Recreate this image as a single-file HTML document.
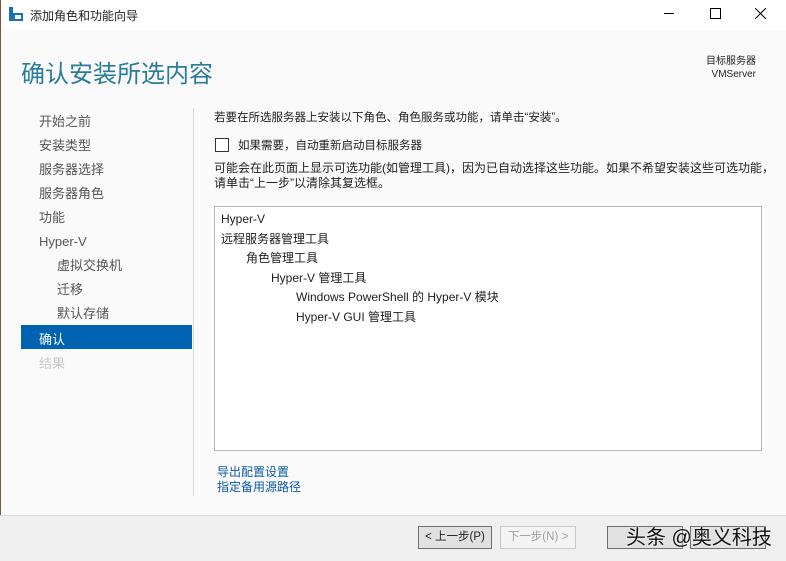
<!DOCTYPE html>
<html><head><meta charset="utf-8"><style>
body{margin:0;width:786px;height:560px;overflow:hidden;background:#fafafa;font-family:"Liberation Sans","Noto Sans CJK SC",sans-serif;position:relative;font-size:12px;color:#1e1e1e}
.a{position:absolute;white-space:nowrap}
</style></head><body>
<div class="a" style="left:0;top:0;width:786px;height:30px;background:#fff"></div>
<div class="a" style="left:0;top:0;width:1px;height:560px;background:#7a5a3a"></div>
<svg class="a" style="left:8px;top:6px" width="16" height="16"><rect x="1" y="1" width="4" height="14" fill="#1a6fb5"/><rect x="5" y="7" width="10" height="8" fill="#1a6fb5"/><rect x="7" y="9" width="6" height="4" fill="#fff"/></svg>
<div class="a" style="left:30px;top:7px;font-size:12px">添加角色和功能向导</div>
<div class="a" style="left:664px;top:13px;width:10px;height:1px;background:#000"></div>
<div class="a" style="left:710px;top:8px;width:9px;height:9px;border:1px solid #000"></div>
<svg class="a" style="left:755px;top:8px" width="11" height="11"><path d="M0 0L11 11M11 0L0 11" stroke="#000" stroke-width="1"/></svg>
<div class="a" style="left:21px;top:54px;font-size:24px;color:#2a7c9c">确认安装所选内容</div>
<div class="a" style="left:700px;top:55px;font-size:10px;text-align:right;width:56px;line-height:13px">目标服务器<br>VMServer</div>
<div class="a" style="left:39px;top:110px;font-size:13px;line-height:24px;color:#555">开始之前<br>安装类型<br>服务器选择<br>服务器角色<br>功能<br>Hyper-V<br><span style="padding-left:18px">虚拟交换机</span><br><span style="padding-left:18px">迁移</span><br><span style="padding-left:18px">默认存储</span></div>
<div class="a" style="left:21px;top:325px;width:171px;height:24px;background:#0063b1"></div>
<div class="a" style="left:39px;top:329px;font-size:13px;color:#fff">确认</div>
<div class="a" style="left:39px;top:353px;font-size:13px;color:#c8c8c8">结果</div>
<div class="a" style="left:193px;top:108px;width:1px;height:388px;background:#d8d8d8"></div>
<div class="a" style="left:214px;top:109px;font-size:11.5px">若要在所选服务器上安装以下角色、角色服务或功能，请单击“安装”。</div>
<div class="a" style="left:215px;top:138px;width:12px;height:12px;border:1px solid #333;background:#fff"></div>
<div class="a" style="left:238px;top:137px;font-size:11.5px">如果需要，自动重新启动目标服务器</div>
<div class="a" style="left:214px;top:161px;font-size:12px;line-height:15px;white-space:normal;width:566px">可能会在此页面上显示可选功能(如管理工具)，因为已自动选择这些功能。如果不希望安装这些可选功能，请单击“上一步”以清除其复选框。</div>
<div class="a" style="left:214px;top:206px;width:546px;height:243px;border:1px solid #b9b9b9;background:#fff"></div>
<div class="a" style="left:221px;top:210px;font-size:12px;line-height:19.5px">Hyper-V<br>远程服务器管理工具<br><span style="padding-left:25px">角色管理工具</span><br><span style="padding-left:50px">Hyper-V 管理工具</span><br><span style="padding-left:75px">Windows PowerShell 的 Hyper-V 模块</span><br><span style="padding-left:75px">Hyper-V GUI 管理工具</span></div>
<div class="a" style="left:217px;top:465px;font-size:12px;line-height:15px;color:#0b5aa8">导出配置设置<br>指定备用源路径</div>
<div class="a" style="left:0;top:515px;width:786px;height:45px;background:#f0f0f0;border-top:1px solid #dadada"></div>
<div class="a" style="left:418px;top:526px;width:72px;height:21px;border:1px solid #6f6f6f;background:#e1e1e1;font-size:11.5px;line-height:21px;text-align:center">&lt; 上一步(P)</div>
<div class="a" style="left:500px;top:526px;width:74px;height:21px;border:1px solid #c8c8c8;background:#f4f4f4;color:#a0a0a0;font-size:11.5px;line-height:21px;text-align:center">下一步(N) &gt;</div>
<div class="a" style="left:607px;top:526px;width:74px;height:21px;border:1px solid #6f6f6f;background:#e1e1e1"></div>
<div class="a" style="left:690px;top:526px;width:74px;height:21px;border:1px solid #6f6f6f;background:#e1e1e1"></div>
<div class="a" style="left:626px;top:521px;font-size:20px;color:#111;text-shadow:0 0 2px #fff">头条 @奥义科技</div>
</body></html>
